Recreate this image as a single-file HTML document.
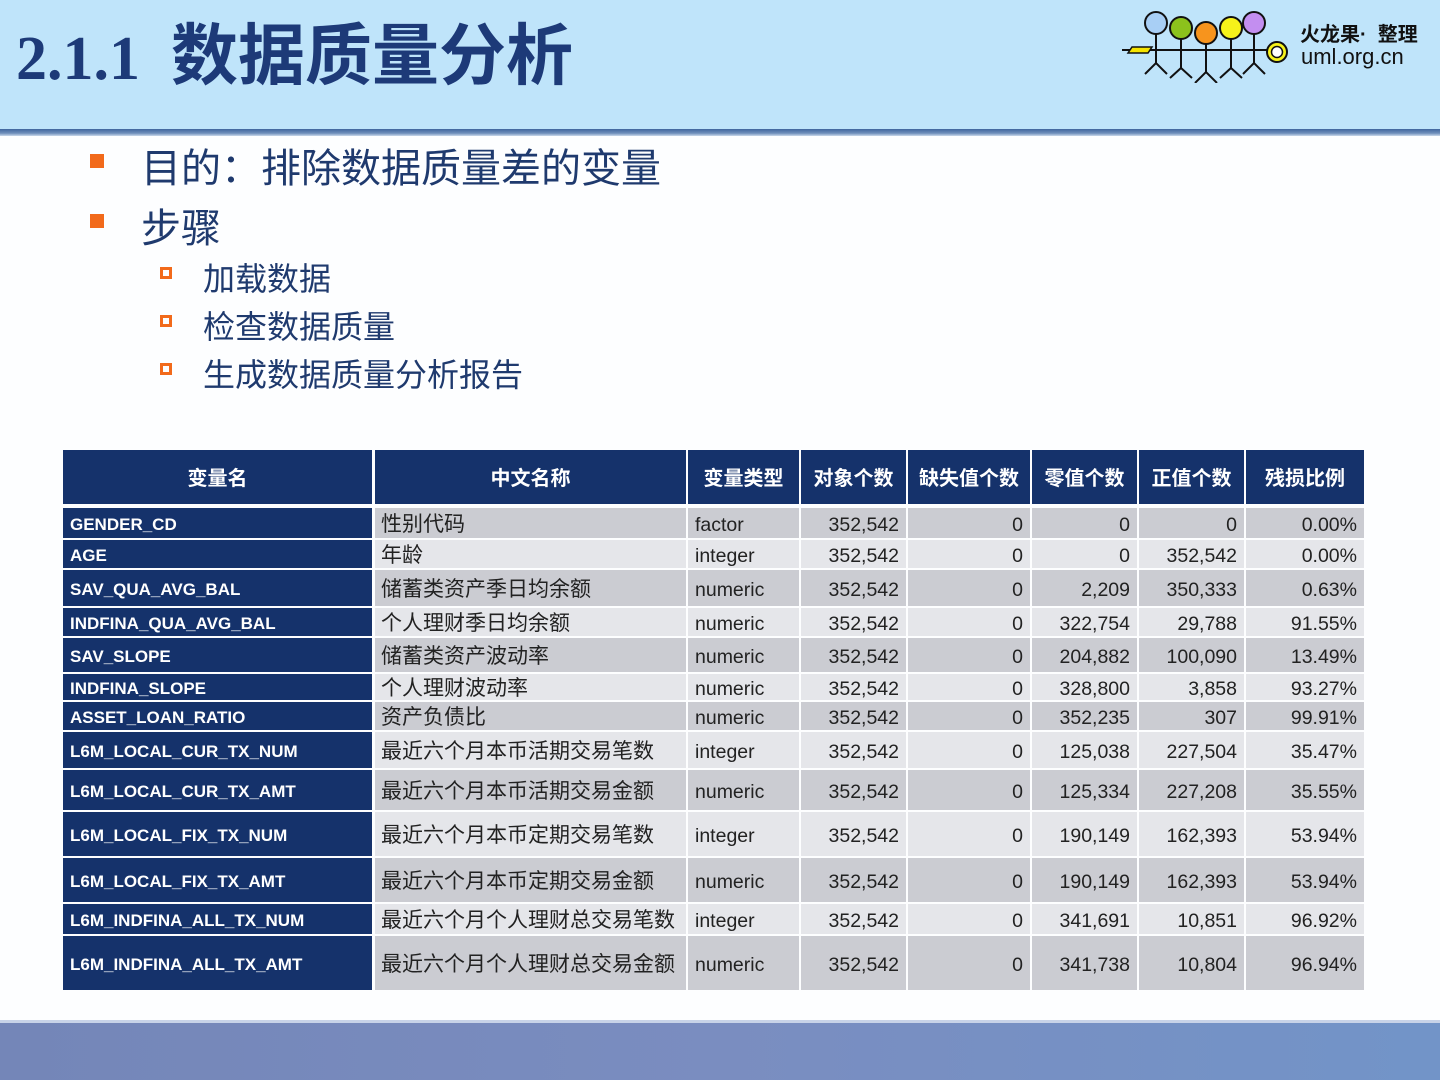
<!DOCTYPE html>
<html><head><meta charset="utf-8">
<style>
*{margin:0;padding:0;box-sizing:border-box}
body{width:1440px;height:1080px;position:relative;overflow:hidden;background:#fdfeff;font-family:"Liberation Sans","Noto Sans CJK SC",sans-serif}
.hdr{position:absolute;left:0;top:0;width:1440px;height:130px;background:#bfe4fa}
.hline{position:absolute;left:0;top:129px;width:1440px;height:7px;background:linear-gradient(#3f659e,#6f8fbb 60%,#c9d8ea)}
.title{position:absolute;left:16px;top:2px;font-size:62px;font-weight:bold;color:#1d3a78;font-family:"Liberation Serif","Noto Serif CJK SC",serif;white-space:nowrap}
.title span{font-family:"Liberation Sans","Noto Sans CJK SC",sans-serif;font-size:67px;margin-left:31px}
.ab{position:absolute;color:#1f3a6e;white-space:nowrap}
.b1{font-size:40px}
.b2{font-size:32px}
.sq{position:absolute;width:14px;height:14px;background:#f26a1b}
.hs{position:absolute;width:12px;height:12px;border:3px solid #f26a1b}
.bot{position:absolute;left:0;top:1023px;width:1440px;height:57px;background:linear-gradient(90deg,#7486b8,#7a8dc0 50%,#7294c8)}
.botl{position:absolute;left:0;top:1020px;width:1440px;height:4px;background:#c8d3e8}
.c{position:absolute;font-size:19.5px;line-height:1;color:#222;white-space:nowrap;display:flex;align-items:center;padding:3px 7px 0}
.c span{display:block;line-height:20px;height:20px}
.cn{font-size:21px;padding-left:6px}
.n{background:#15326b;color:#fff;font-weight:bold;font-size:17px}
.h{background:#15326b;color:#fff;font-weight:bold;font-size:20px;justify-content:center}
.r{justify-content:flex-end}
.d{background:#cbccd2}.l{background:#e5e6ea}
</style></head><body>
<div class="hdr"></div>
<div class="hline"></div>
<div class="title">2.1.1<span>数据质量分析</span></div>
<svg style="position:absolute;left:1118px;top:8px" width="180" height="75" viewBox="0 0 180 75">
<g stroke="#111" stroke-width="2" fill="none">
<line x1="4" y1="42" x2="150" y2="42"/>
<line x1="38" y1="26" x2="38" y2="55"/><path d="M27 66 L38 55 L49 66"/>
<line x1="63" y1="31" x2="63" y2="60"/><path d="M52 70 L63 60 L74 70"/>
<line x1="88" y1="35" x2="88" y2="64"/><path d="M77 75 L88 64 L99 75"/>
<line x1="113" y1="30" x2="113" y2="60"/><path d="M102 70 L113 60 L124 70"/>
<line x1="136" y1="26" x2="136" y2="55"/><path d="M125 66 L136 55 L147 66"/>
</g>
<polygon points="10,45 14,39 34,39 30,45" fill="#f5e400" stroke="#111" stroke-width="1.5"/>
<circle cx="38" cy="15" r="11" fill="#a8cff5" stroke="#111" stroke-width="2"/>
<circle cx="63" cy="20" r="11" fill="#8cc21c" stroke="#111" stroke-width="2"/>
<circle cx="88" cy="25" r="11" fill="#f7941d" stroke="#111" stroke-width="2"/>
<circle cx="113" cy="20" r="11" fill="#f6f21a" stroke="#111" stroke-width="2"/>
<circle cx="136" cy="15" r="11" fill="#c38ef0" stroke="#111" stroke-width="2"/>
<circle cx="159" cy="44" r="10" fill="#f6f21a" stroke="#111" stroke-width="2"/>
<circle cx="159" cy="44" r="5.5" fill="#fff" stroke="#111" stroke-width="1.5"/>
</svg>
<div class="ab" style="left:1300px;top:18px;font-size:20px;font-weight:bold;color:#111">火龙果· &nbsp;整理</div>
<div class="ab" style="left:1301px;top:44px;font-size:22px;color:#111">uml.org.cn</div>

<div class="sq" style="left:90px;top:154px"></div>
<div class="ab b1" style="left:141px;top:136px">目的：排除数据质量差的变量</div>
<div class="sq" style="left:90px;top:214px"></div>
<div class="ab b1" style="left:141px;top:196px">步骤</div>
<div class="hs" style="left:160px;top:267px"></div>
<div class="ab b2" style="left:203px;top:254px">加载数据</div>
<div class="hs" style="left:160px;top:315px"></div>
<div class="ab b2" style="left:203px;top:302px">检查数据质量</div>
<div class="hs" style="left:160px;top:363px"></div>
<div class="ab b2" style="left:203px;top:350px">生成数据质量分析报告</div>

<div id="t"></div>
<div class="botl"></div>
<div class="bot"></div>
<script>
var cols=[[63,309],[375,311],[688,111],[801,105],[908,122],[1032,105],[1139,105],[1246,118]];
var hd=["变量名","中文名称","变量类型","对象个数","缺失值个数","零值个数","正值个数","残损比例"];
var rows=[[508,30],[540,28],[570,36],[608,28],[638,34],[674,26],[702,28],[732,36],[770,40],[812,44],[858,44],[904,30],[936,54]];
var data=[
["GENDER_CD","性别代码","factor","352,542","0","0","0","0.00%"],
["AGE","年龄","integer","352,542","0","0","352,542","0.00%"],
["SAV_QUA_AVG_BAL","储蓄类资产季日均余额","numeric","352,542","0","2,209","350,333","0.63%"],
["INDFINA_QUA_AVG_BAL","个人理财季日均余额","numeric","352,542","0","322,754","29,788","91.55%"],
["SAV_SLOPE","储蓄类资产波动率","numeric","352,542","0","204,882","100,090","13.49%"],
["INDFINA_SLOPE","个人理财波动率","numeric","352,542","0","328,800","3,858","93.27%"],
["ASSET_LOAN_RATIO","资产负债比","numeric","352,542","0","352,235","307","99.91%"],
["L6M_LOCAL_CUR_TX_NUM","最近六个月本币活期交易笔数","integer","352,542","0","125,038","227,504","35.47%"],
["L6M_LOCAL_CUR_TX_AMT","最近六个月本币活期交易金额","numeric","352,542","0","125,334","227,208","35.55%"],
["L6M_LOCAL_FIX_TX_NUM","最近六个月本币定期交易笔数","integer","352,542","0","190,149","162,393","53.94%"],
["L6M_LOCAL_FIX_TX_AMT","最近六个月本币定期交易金额","numeric","352,542","0","190,149","162,393","53.94%"],
["L6M_INDFINA_ALL_TX_NUM","最近六个月个人理财总交易笔数","integer","352,542","0","341,691","10,851","96.92%"],
["L6M_INDFINA_ALL_TX_AMT","最近六个月个人理财总交易金额","numeric","352,542","0","341,738","10,804","96.94%"]];
var h="";
cols.forEach(function(c,i){h+='<div class="c h" style="left:'+c[0]+'px;top:450px;width:'+c[1]+'px;height:54px"><span>'+hd[i]+'</span></div>';});
rows.forEach(function(r,ri){var sh=ri%2==0?"d":"l";
cols.forEach(function(c,i){var cl=i==0?"n":sh+(i>=3?" r":"")+(i==1?" cn":"");
h+='<div class="c '+cl+'" style="left:'+c[0]+'px;top:'+r[0]+'px;width:'+c[1]+'px;height:'+r[1]+'px"><span>'+data[ri][i]+'</span></div>';});});
document.getElementById("t").innerHTML=h;
</script>
</body></html>
